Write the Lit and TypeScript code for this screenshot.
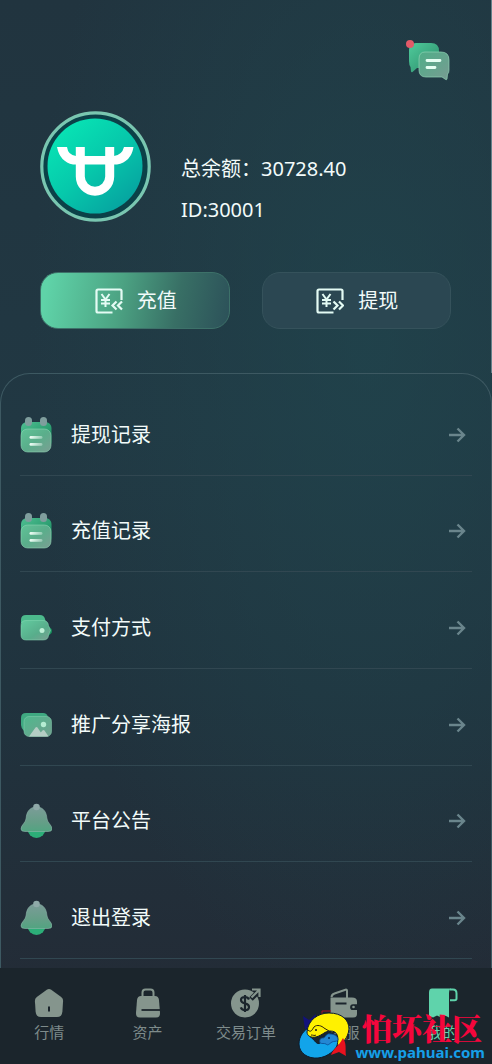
import { LitElement, html, css, svg, nothing } from "lit";
import { customElement, state } from "lit/decorators.js";

const calendar = svg`
  <svg class="glyph" viewBox="0 0 32 38" aria-hidden="true">
    <defs>
      <linearGradient id="cb" x1="0" y1="0" x2="1" y2="1"><stop offset="0" stop-color="#4fbf92"/><stop offset="1" stop-color="#14875a"/></linearGradient>
      <linearGradient id="cf" x1="0" y1="0" x2="1" y2="1"><stop offset="0" stop-color="#5fc397"/><stop offset=".5" stop-color="#5aae8b"/><stop offset="1" stop-color="#7b9f93"/></linearGradient>
      <linearGradient id="cl" x1="0" x2="1"><stop offset="0" stop-color="#f2fff8"/><stop offset="1" stop-color="#f2fff8" stop-opacity=".35"/></linearGradient>
    </defs>
    <rect x="1" y="6" width="30.500" height="26" rx="6" fill="url(#cb)"/>
    <rect x="5" y="1" width="7" height="9" rx="3.500" fill="#7f9e9d"/>
    <rect x="20" y="1" width="7" height="9" rx="3.500" fill="#7f9e9d"/>
    <rect x="1" y="13" width="30" height="23" rx="6.500" fill="url(#cf)" stroke="#8fd3b4" stroke-width=".6"/>
    <rect x="9.500" y="20" width="13" height="2.800" rx="1.400" fill="url(#cl)"/>
    <rect x="9.500" y="27" width="13" height="2.800" rx="1.400" fill="url(#cl)"/>
  </svg>`;

const wallet = svg`
  <svg class="glyph" viewBox="0 0 32 38" aria-hidden="true">
    <defs>
      <linearGradient id="wf" x1="0" y1="0" x2="1" y2="1"><stop offset="0" stop-color="#62cb9f"/><stop offset=".6" stop-color="#58ad8b"/><stop offset="1" stop-color="#7d9f94"/></linearGradient>
    </defs>
    <path d="M6 6h14q4 0 5 4l1 4H1v-3q0-5 5-5z" fill="#4cb98c"/>
    <path d="M23 12l8.500 8q.8 2 0 4L25 30z" fill="#18935f"/>
    <path d="M6 11.500h17q5 0 5.500 5l2 5-2 4.500q0 5-5.500 5H6q-5 0-5-5V16.500q0-5 5-5z" fill="url(#wf)" stroke="#88d8b4" stroke-width=".5"/>
    <circle cx="22" cy="21.500" r="2.500" fill="#bdf0d7"/>
  </svg>`;

const picture = svg`
  <svg class="glyph" viewBox="0 0 32 38" aria-hidden="true">
    <defs>
      <linearGradient id="pf" x1="0" y1="0" x2="1" y2="1"><stop offset="0" stop-color="#4fb88d"/><stop offset="1" stop-color="#71a08f"/></linearGradient>
    </defs>
    <path d="M6 7h17q4 0 5 4l-18 18q-4 0-6-4Q1 22 1 19v-7q0-5 5-5z" fill="#3fa981"/>
    <rect x="4" y="10.500" width="27.500" height="20" rx="5" fill="url(#pf)" stroke="#88d0b0" stroke-width=".5"/>
    <circle cx="23.500" cy="18.500" r="2.700" fill="#b5ecd2"/>
    <path d="M17 30.500l5.500-6q1-1 2 0l4 6zM9 30.500l6.500-9q1-1 2 0l6 9z" fill="#b4cdc4"/>
  </svg>`;

const bell = svg`
  <svg class="glyph" viewBox="0 0 32 38" aria-hidden="true">
    <defs>
      <linearGradient id="bf" x1="0" y1="0" x2="0" y2="1"><stop offset="0" stop-color="#7b9c98"/><stop offset=".6" stop-color="#669e88"/><stop offset="1" stop-color="#52a481"/></linearGradient>
    </defs>
    <circle cx="16.500" cy="27" r="9" fill="#2cae78"/>
    <path d="M16.500 5C9 5 6.500 11 6.200 16c-.4 5-5.200 7-5.200 11q0 2.500 4 2.500h23q4 0 4-2.500c0-4-4.800-6-5.200-11C26.500 11 24 5 16.500 5z" fill="url(#bf)" stroke="#8fb7ab" stroke-width=".6"/>
    <circle cx="16.500" cy="5" r="3.300" fill="#8fa9a8"/>
  </svg>`;

const arrow = svg`
  <svg class="arrow" viewBox="0 0 18 16" aria-hidden="true">
    <path d="M1 8h15M9.500 1.500L16 8l-6.500 6.500" fill="none" stroke="#6a858c" stroke-width="2.400"/>
  </svg>`;

const note = (chevrons: string) => svg`
  <svg class="note" viewBox="0 0 28 26" fill="none" stroke="#e4fbf4" stroke-width="2.200" aria-hidden="true">
    <path d="M26.500 12V3q0-1.500-1.500-1.500H3Q1.500 1.500 1.500 3v20q0 1.500 1.500 1.500h14.500"/>
    <path d="M6.500 6l4 5.500 4-5.500M10.500 11v8M6 12h9M6 15.500h9" stroke-width="2"/>
    <path d=${chevrons}/>
  </svg>`;

const depositNote = note("M21.500 13.500l-4 4 4 4M27 13.500l-4 4 4 4");
const withdrawNote = note("M17.500 13.500l4 4-4 4M23 13.500l4 4-4 4");

const home = svg`
  <svg class="tab-icon" viewBox="0 0 30 30" aria-hidden="true">
    <path d="M12.800 1.800q2.200-1.600 4.400 0l10 7.300q2 1.500 1.900 4l-.7 10.400q-.4 5.500-5.400 5.500H7q-5 0-5.400-5.500L.9 13.100q-.1-2.500 1.900-4z" fill="#85958d"/>
    <path d="M15 18.500v5" stroke="#1b252c" stroke-width="2"/>
  </svg>`;

const bag = svg`
  <svg class="tab-icon" viewBox="0 0 30 30" aria-hidden="true">
    <path d="M9.500 9V4.500q0-3 3-3h5q3 0 3 3V9" fill="none" stroke="#85958d" stroke-width="2"/>
    <path d="M8 8h14q3.500 0 4 4l1 13q.2 4.500-4 4.500H7q-4.200 0-4-4.500l1-13q.5-4 4-4z" fill="#85958d"/>
    <path d="M8.500 22H27" stroke="#1b252c" stroke-width="1.800"/>
  </svg>`;

const dollar = svg`
  <svg class="tab-icon" viewBox="0 0 30 30" aria-hidden="true">
    <circle cx="14" cy="15.500" r="14" fill="#85958d"/>
    <path d="M18 11.500q-1-2.500-4-2.500-4 0-4 3 0 2.600 4 3.400t4 3.500q0 3.100-4 3.100-3.300 0-4.200-2.700M14 7v17" fill="none" stroke="#1b252c" stroke-width="2.200"/>
    <path d="M20 11L29 2" stroke="#1b252c" stroke-width="5"/>
    <path d="M20.500 9.500L28 2M21 1.500h7.500V9" fill="none" stroke="#85958d" stroke-width="2.200"/>
  </svg>`;

const purse = svg`
  <svg class="tab-icon" viewBox="0 0 30 30" aria-hidden="true">
    <path d="M2.500 9.500q0-3 3-4l11-3.800q1.500-.4 1.500 1.300V10" fill="none" stroke="#85958d" stroke-width="2"/>
    <path d="M4 9.500h19q5 0 5 4v2.800h-4a2.900 2.900 0 0 0 0 5.800h4V26q0 3.500-4 3.500H5q-3.500 0-3.500-4V10z" fill="#85958d"/>
    <path d="M6.500 15.500h11" stroke="#1b252c" stroke-width="2"/>
    <circle cx="24.500" cy="19" r="1.300" fill="#85958d"/>
  </svg>`;

const scroll = svg`
  <svg class="tab-icon" viewBox="0 0 30 30" aria-hidden="true">
    <path d="M22 1.500h3q3.500 0 3.500 4v5q0 1.800-1.800 1.800H22" fill="none" stroke="#5fd3ab" stroke-width="2"/>
    <path d="M4 .500h19q-2 1-2 5v24l-4-2-4 2-4-2-4 2-4-2V4.500q0-4 3-4z" fill="#5fd3ab"/>
  </svg>`;

const fish = svg`
  <svg class="fish" viewBox="0 0 52 52" aria-hidden="true">
    <path d="M5 6l6 4 7-6-3 14-8 1z" fill="#12127c"/>
    <path d="M24 1h9M24 1v5" fill="none" stroke="#a3122a" stroke-width="1"/>
    <path d="M12 17C6 20 1 26 1 34c0 9 9 15 19 14s18-8 21-16c1-6-5-9-11-8-4 1-5 6-8 9-3 2-5-2-7-4-4-2-5-7-3-12z" fill="#12a4ea" stroke="#0d1b2c" stroke-width="1"/>
    <path d="M9 22C10 10 20 3 31 3c13 0 20 7 20 16-1 9-6 14-12 17 2-9 1-15-7-15-5 0-7 4-14 6-5 1-9-1-9-5z" fill="#fff100" stroke="#0d1b2c" stroke-width="1"/>
    <path d="M10 20c3 3 4 0 6-3 3-3 8-1 10 1l5 3M13 25c2 0 4 1 5 0" fill="none" stroke="#30240c" stroke-width="1"/>
    <path d="M22 33c-1-4 1-5 3-5 3 0 3-5 7-4 5 0 8 3 8 6-2 2-4 1-6 2-3 2-4 4-6 2-2-1-4 0-6-1z" fill="#2387d3" stroke="#0a4a93" stroke-width=".800"/>
    <path d="M45 28c4 6 2 12 3 18l-7-4-8 3c2-6 8-9 12-17z" fill="#e8121f"/>
    <circle cx="18" cy="20" r="1" fill="#171a1a"/><circle cx="31" cy="28" r="1" fill="#0a2b55"/>
  </svg>`;

const menu = [
  { label: "提现记录", icon: calendar },
  { label: "充值记录", icon: calendar },
  { label: "支付方式", icon: wallet },
  { label: "推广分享海报", icon: picture },
  { label: "平台公告", icon: bell },
  { label: "退出登录", icon: bell },
];

const tabs = [
  { label: "行情", icon: home },
  { label: "资产", icon: bag },
  { label: "交易订单", icon: dollar },
  { label: "客服", icon: purse },
  { label: "我的", icon: scroll },
];

@customElement("app-root")
export class AppRoot extends LitElement {
  @state() private active = 4;

  static styles = css`
    :host {
      display: block;
      font-family: "Noto Sans", "Noto Sans CJK SC", sans-serif;
      color: #f2fbfa;
    }
    * { box-sizing: border-box; }
    a { color: inherit; text-decoration: none; }
    svg { display: block; flex: none; }
    .page {
      min-height: 100vh;
      display: flex;
      flex-direction: column;
      background:
        radial-gradient(ellipse at 75% 32%, rgba(32, 70, 78, 0.7), rgba(32, 66, 76, 0) 65%),
        linear-gradient(180deg, #21343f 0%, #213843 40%, #20333e 65%, #232c37 92%);
    }
    .top {
      display: flex;
      justify-content: flex-end;
      padding: 39px 41px 0;
      border-right: 1px solid #65818a;
    }
    .chat {
      padding: 0;
      border: 0;
      background: none;
      cursor: pointer;
    }
    .chat svg { width: 45px; height: 42px; }
    .hero {
      display: flex;
      gap: 30px;
      padding: 30px 40px 0;
      border-right: 1px solid #65818a;
    }
    .avatar { width: 111px; height: 111px; }
    .facts {
      display: grid;
      align-content: start;
      gap: 12px;
      margin: 0;
      padding-top: 43px;
      font-size: 20px;
      line-height: 29px;
    }
    .facts p { margin: 0; white-space: nowrap; }
    .actions {
      display: grid;
      grid-template-columns: 1fr 1fr;
      gap: 32px;
      padding: 50px 40px 44px;
      border-right: 1px solid #65818a;
      margin-top: -2px;
    }
    .action {
      display: flex;
      align-items: center;
      justify-content: center;
      gap: 14px;
      height: 57px;
      padding: 0 0 0 2px;
      border: 1px solid #35525b;
      border-radius: 18px;
      background: #2b4752;
      color: inherit;
      font: inherit;
      font-size: 20px;
      line-height: 28px;
      cursor: pointer;
    }
    .action.primary {
      border-color: #3d7169;
      background: linear-gradient(100deg, #5fd3a8 4%, #4ca383 42%, #386f65 72%, #2d535a 98%);
    }
    .note { width: 28px; height: 26px; }
    .panel {
      flex: 1;
      display: grid;
      grid-auto-rows: 1fr;
      margin: 0;
      padding: 5px 19px 9px;
      list-style: none;
      border: 1px solid #3d5962;
      border-bottom: 0;
      border-radius: 30px 30px 0 0;
    }
    .row { display: grid; border-bottom: 1px solid #314751; }
    .row a {
      display: flex;
      align-items: center;
      gap: 19px;
      padding: 16px 6px 0 0;
      font-size: 20px;
      line-height: 30px;
    }
    .row span { flex: 1; }
    .glyph { width: 32px; height: 38px; }
    .arrow { width: 18px; height: 16px; }
    .tabs {
      display: grid;
      grid-template-columns: repeat(5, 1fr);
      height: 96px;
      padding-top: 20px;
      background: #1b252c;
      position: relative;
    }
    .tab {
      display: grid;
      justify-items: center;
      align-content: start;
      gap: 3px;
      font-size: 15px;
      line-height: 22px;
      color: #7e8b8b;
    }
    .tab.active { color: #5fd3ab; }
    .tab-icon { width: 30px; height: 30px; }
    .mark {
      position: absolute;
      right: 7px;
      bottom: 2px;
      display: flex;
      align-items: center;
      gap: 5px;
      pointer-events: none;
    }
    .fish { width: 52px; height: 52px; }
    .mark-text { display: grid; justify-items: end; }
    .mark-name {
      padding-right: 3px;
      font-family: "Noto Serif CJK SC", "Noto Sans CJK SC", serif;
      font-weight: 900;
      font-size: 30px;
      line-height: 32px;
      color: #f5063c;
    }
    .mark-url {
      font-weight: 700;
      font-size: 15px;
      line-height: 18px;
      color: #169fe8;
    }
  `;

  render() {
    return html`
      <div class="page">
        <header class="top">
          <button class="chat" aria-label="消息">
            <svg viewBox="0 0 45 42">
              <defs>
                <linearGradient id="m1" x1="0" y1="0" x2="1" y2="1"><stop offset="0" stop-color="#4fcb9b"/><stop offset="1" stop-color="#2b8a69"/></linearGradient>
                <linearGradient id="m2" x1="0" y1="0" x2="1" y2="1"><stop offset="0" stop-color="#4fae88"/><stop offset="1" stop-color="#789b92"/></linearGradient>
              </defs>
              <path d="M11 4h15q8 0 8 8v10q0 7-7 7H12l-4.500 4q-1 .7-1.500-.5L5.500 28Q4 26 4 22V11q0-7 7-7z" fill="url(#m1)"/>
              <path d="M20 13h16q8 0 8 8v10q0 3-1.500 4l-.5 5q-.4 1.300-1.500.4L37 38H21q-7 0-7-7V20q0-7 6-7z" fill="url(#m2)" stroke="#8fd3b4" stroke-width=".7"/>
              <path d="M22 21.500h13M22 28.500h8" stroke="#e6fff3" stroke-width="2.800" stroke-linecap="round"/>
              <circle cx="5" cy="5" r="4" fill="#e35a68"/>
            </svg>
          </button>
        </header>

        <section class="hero">
          <svg class="avatar" viewBox="0 0 111 111" role="img" aria-label="头像">
            <defs>
              <linearGradient id="av" x1=".15" y1=".1" x2=".85" y2=".9"><stop offset="0" stop-color="#08e3b4"/><stop offset=".5" stop-color="#06c8ab"/><stop offset="1" stop-color="#06a3a0"/></linearGradient>
            </defs>
            <circle cx="55.500" cy="55.500" r="53.700" fill="#0b4148" stroke="#79c6b0" stroke-width="3.200"/>
            <circle cx="55" cy="55" r="47.500" fill="url(#av)"/>
            <path d="M17 36H27Q28 44 36 45H74Q82 44 84 36H93.500Q91 51 77 53.500H33Q20 51 17 36z" fill="#fff"/>
            <path d="M40.300 36v29.500a14.700 14.700 0 0 0 29.400 0V36" fill="none" stroke="#fff" stroke-width="9"/>
          </svg>
          <div class="facts">
            <p>总余额：30728.40</p>
            <p>ID:30001</p>
          </div>
        </section>

        <div class="actions">
          <button class="action primary">${depositNote}充值</button>
          <button class="action">${withdrawNote}提现</button>
        </div>

        <ul class="panel">
          ${menu.map((m) => html`<li class="row"><a href="#">${m.icon}<span>${m.label}</span>${arrow}</a></li>`)}
        </ul>

        <nav class="tabs">
          ${tabs.map(
            (t, i) => html`<a
              class="tab ${i === this.active ? "active" : ""}"
              href="#"
              aria-current=${i === this.active ? "page" : nothing}
              @click=${() => (this.active = i)}
              >${t.icon}<span>${t.label}</span></a
            >`
          )}
          <div class="mark">
            ${fish}
            <div class="mark-text">
              <span class="mark-name">怕坏社区</span>
              <span class="mark-url">www.pahuai.com</span>
            </div>
          </div>
        </nav>
      </div>
    `;
  }
}
